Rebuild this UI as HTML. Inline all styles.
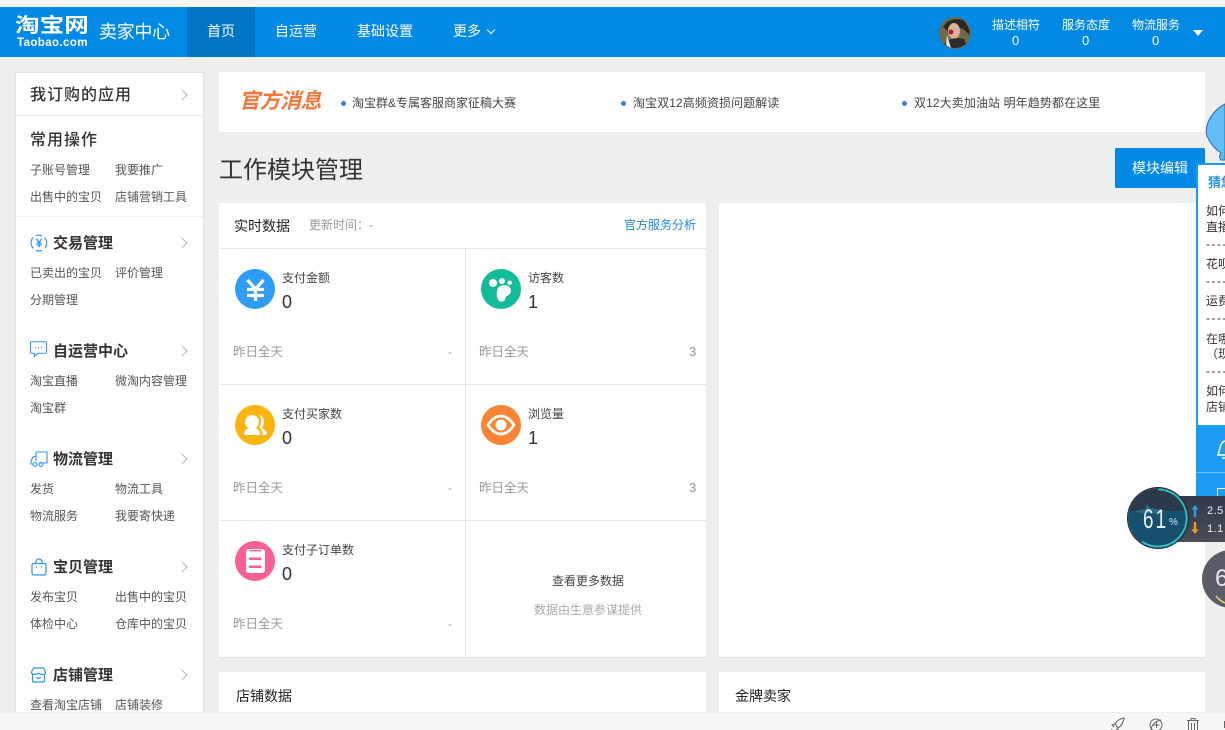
<!DOCTYPE html>
<html lang="zh"><head><meta charset="utf-8"><title>卖家中心</title>
<style>
*{margin:0;padding:0;box-sizing:border-box}
html,body{width:1225px;height:730px;overflow:hidden;background:#eeeeee}
body{position:relative;font-family:"Liberation Sans","Noto Sans CJK SC",sans-serif;font-size:12px;color:#3c3c3c}
.a{position:absolute}
.t{position:absolute;white-space:nowrap;line-height:16px;font-size:12px}
.w{background:#fff;position:absolute}
.n{color:#fff;font-size:14px}
.s{color:#555}
.h{font-size:15px;font-weight:700;color:#333}
.g{color:#999}
.ar{position:absolute;width:8px;height:8px;margin:-.5px 0 0 -1.5px;border-top:1px solid #b5b5b5;border-right:1px solid #b5b5b5;transform:rotate(45deg)}
.l{position:absolute;background:#e6e6e6}
.c{position:absolute;width:40px;height:40px;border-radius:50%}
.num{font-size:18px;color:#333;line-height:22px}
svg{position:absolute;overflow:visible}
</style></head><body>

<div class="a" style="left:0;top:0;width:1225px;height:7px;background:#f6f6f6"></div>
<div class="a" style="left:0;top:7px;width:1225px;height:50px;background:#0089e5"></div>
<div class="a" style="left:187px;top:7px;width:68px;height:50px;background:#0075c3"></div>
<div class="t" style="left:15px;top:14px;font-size:20px;line-height:24px;color:#fff;font-weight:700;transform:scaleX(1.23);transform-origin:left center">淘宝网</div>
<div class="t" style="left:17px;top:36px;font-size:11.5px;line-height:14px;color:#fff;font-weight:700;letter-spacing:.4px">Taobao.com</div>
<div class="t" style="left:99px;top:20px;font-size:18px;line-height:24px;color:#fff;letter-spacing:-.3px">卖家中心</div>
<div class="t n" style="left:207px;top:23px">首页</div>
<div class="t n" style="left:275px;top:23px">自运营</div>
<div class="t n" style="left:357px;top:23px">基础设置</div>
<div class="t n" style="left:453px;top:23px">更多</div>
<div class="a" style="left:488px;top:27px;width:6px;height:6px;border-right:1px solid #fff;border-bottom:1px solid #fff;transform:rotate(45deg)"></div>

<svg style="left:939px;top:17px" width="32" height="32" viewBox="0 0 32 32">
<circle cx="16" cy="16" r="16" fill="#6f6a4c"/>
<path d="M4 10 Q10 0 24 3 Q30 8 31 18 L24 12 Q14 8 9 14Z" fill="#2b2622"/>
<ellipse cx="15" cy="14" rx="6" ry="8" fill="#d8b09c"/>
<circle cx="12" cy="15" r="2.4" fill="#b5141e"/>
<path d="M5 27 Q12 19 25 22 L27 27 Q16 35 5 27Z" fill="#2c2a2a"/>
<path d="M8 18 L12 31 L7 28Z" fill="#e8e4dc"/>
</svg>

<div class="t" style="left:992px;top:17px;color:#fff">描述相符</div>
<div class="t" style="left:1012px;top:33px;color:#fff;font-size:13px">0</div>
<div class="t" style="left:1062px;top:17px;color:#fff">服务态度</div>
<div class="t" style="left:1082px;top:33px;color:#fff;font-size:13px">0</div>
<div class="t" style="left:1132px;top:17px;color:#fff">物流服务</div>
<div class="t" style="left:1152px;top:33px;color:#fff;font-size:13px">0</div>
<div class="a" style="left:1193px;top:30px;width:0;height:0;border-left:5.5px solid transparent;border-right:5.5px solid transparent;border-top:6px solid #fff"></div>

<!-- sidebar -->
<div class="w" style="left:15px;top:72px;width:189px;height:650px;border:1px solid #e2e2e2"></div>
<div class="l" style="left:16px;top:115px;width:187px;height:1px"></div>
<div class="t" style="left:30px;top:86px;font-size:16px;line-height:20px;letter-spacing:1px;font-weight:500;color:#333">我订购的应用</div>
<div class="ar" style="left:179px;top:91px"></div>
<div class="t" style="left:30px;top:131px;font-size:16px;line-height:20px;letter-spacing:1px;font-weight:500;color:#333">常用操作</div>
<div class="t s" style="left:30px;top:162px">子账号管理</div><div class="t s" style="left:115px;top:162px">我要推广</div>
<div class="t s" style="left:30px;top:189px">出售中的宝贝</div><div class="t s" style="left:115px;top:189px">店铺营销工具</div>
<div class="l" style="left:16px;top:216px;width:187px;height:1px;background:#efefef"></div>

<svg style="left:30px;top:234px" width="18" height="18" viewBox="0 0 18 18" fill="none" stroke="#2c97e8" stroke-width="1.2">
<path d="M3 3.5A8 8 0 0 0 3.5 14.5M14.5 3.5A8 8 0 0 1 15 14M6 1.8A8 8 0 0 1 12 1.8M6 16.3A8 8 0 0 0 12 16.3"/>
<path d="M6.3 4.8L9 8.5L11.7 4.8M9 8.5V13.2M6.3 9H11.7M6.3 11H11.7" stroke-width="1.3"/></svg>
<div class="t h" style="left:53px;top:236px">交易管理</div><div class="ar" style="left:179px;top:239px"></div>
<div class="t s" style="left:30px;top:265px">已卖出的宝贝</div><div class="t s" style="left:115px;top:265px">评价管理</div>
<div class="t s" style="left:30px;top:292px">分期管理</div>

<svg style="left:30px;top:341px" width="17" height="17" viewBox="0 0 17 17" fill="none" stroke="#2c97e8" stroke-width="1">
<path d="M1.5 .8H15.5Q16.5 .8 16.5 2V11Q16.5 12.3 15.5 12.3H8L4.5 15.5V12.3H1.5Q.5 12.3 .5 11V2Q.5 .8 1.5 .8Z"/>
<path d="M5 6.5H6M8 6.5H9M11 6.5H12" stroke-width="1.3"/></svg>
<div class="t h" style="left:53px;top:344px">自运营中心</div><div class="ar" style="left:179px;top:347px"></div>
<div class="t s" style="left:30px;top:373px">淘宝直播</div><div class="t s" style="left:115px;top:373px">微淘内容管理</div>
<div class="t s" style="left:30px;top:400px">淘宝群</div>

<svg style="left:30px;top:451px" width="18" height="16" viewBox="0 0 18 16" fill="none" stroke="#2c97e8" stroke-width="1.1">
<path d="M6 10V3Q6 1 8 1H17V12H9M6 5L3 6L1 10V13H3"/>
<circle cx="5" cy="13.5" r="2"/><circle cx="11" cy="13.5" r="2"/></svg>
<div class="t h" style="left:53px;top:452px">物流管理</div><div class="ar" style="left:179px;top:455px"></div>
<div class="t s" style="left:30px;top:481px">发货</div><div class="t s" style="left:115px;top:481px">物流工具</div>
<div class="t s" style="left:30px;top:508px">物流服务</div><div class="t s" style="left:115px;top:508px">我要寄快递</div>

<svg style="left:31px;top:558px" width="16" height="18" viewBox="0 0 16 18" fill="none" stroke="#2c97e8" stroke-width="1.2">
<path d="M2.5 5.5H13.5Q15 5.5 15 7.5V15Q15 17 13 17H3Q1 17 1 15V7.5Q1 5.5 2.5 5.5Z"/>
<path d="M4.5 5.5Q5 1 8 1Q11 1 11.5 5.5M5 9H6M10 9H11"/></svg>
<div class="t h" style="left:53px;top:560px">宝贝管理</div><div class="ar" style="left:179px;top:563px"></div>
<div class="t s" style="left:30px;top:589px">发布宝贝</div><div class="t s" style="left:115px;top:589px">出售中的宝贝</div>
<div class="t s" style="left:30px;top:616px">体检中心</div><div class="t s" style="left:115px;top:616px">仓库中的宝贝</div>

<svg style="left:31px;top:667px" width="15" height="16" viewBox="0 0 15 16" fill="none" stroke="#2c97e8" stroke-width="1.2">
<path d="M2.5 1H12.5L14.5 5Q14.5 7.5 12 7.5Q9.5 7.5 7.5 6.3Q5.5 7.5 3 7.5Q.5 7.5 .5 5ZM1.5 7.5V14Q1.5 15 3 15H12Q13.5 15 13.5 14V7.5M5 11H10"/></svg>
<div class="t h" style="left:53px;top:668px">店铺管理</div><div class="ar" style="left:179px;top:671px"></div>
<div class="t s" style="left:30px;top:697px">查看淘宝店铺</div><div class="t s" style="left:115px;top:697px">店铺装修</div>

<!-- notice -->
<div class="w" style="left:219px;top:72px;width:986px;height:60px"></div>
<div class="t" style="left:239px;top:89px;font-size:21px;line-height:26px;font-weight:700;font-style:italic;color:#f4773a;letter-spacing:-.5px">官方消息</div>
<div class="a" style="left:341px;top:101px;width:5px;height:5px;border-radius:50%;background:#3f7fdc"></div>
<div class="t" style="left:352px;top:95px;color:#444">淘宝群&amp;专属客服商家征稿大赛</div>
<div class="a" style="left:621px;top:101px;width:5px;height:5px;border-radius:50%;background:#3f7fdc"></div>
<div class="t" style="left:633px;top:95px;color:#444;letter-spacing:.08px">淘宝双12高频资损问题解读</div>
<div class="a" style="left:902px;top:101px;width:5px;height:5px;border-radius:50%;background:#3f7fdc"></div>
<div class="t" style="left:914px;top:95px;color:#444;letter-spacing:.1px">双12大卖加油站 明年趋势都在这里</div>

<div class="t" style="left:219px;top:155px;font-size:24px;line-height:32px;color:#333">工作模块管理</div>
<div class="a" style="left:1115px;top:148px;width:90px;height:40px;background:#0089e5;border-radius:2px"></div>
<div class="t" style="left:1132px;top:160px;font-size:14px;color:#fff">模块编辑</div>

<!-- realtime card -->
<div class="w" style="left:219px;top:203px;width:487px;height:455px;border-bottom:1px solid #e6e6e6"></div>
<div class="t" style="left:234px;top:218px;font-size:14px;color:#222">实时数据</div>
<div class="t g" style="left:309px;top:217px">更新时间：-</div>
<div class="t" style="left:624px;top:217px;color:#1f88d0">官方服务分析</div>
<div class="l" style="left:219px;top:248px;width:487px;height:1px"></div>
<div class="l" style="left:219px;top:384px;width:487px;height:1px"></div>
<div class="l" style="left:219px;top:520px;width:487px;height:1px"></div>
<div class="l" style="left:465px;top:249px;width:1px;height:408px"></div>

<div class="c" style="left:235px;top:269px;background:#2f9cf5"></div>
<svg style="left:235px;top:269px" width="40" height="40" viewBox="0 0 40 40" fill="none" stroke="#fff" stroke-width="3.2"><path d="M12.500 11L20.500 20L28.500 11M20.500 20V32M12 20.500H29M12 26.500H29"/></svg>
<div class="t" style="left:282px;top:270px;color:#444">支付金额</div>
<div class="t num" style="left:282px;top:291px">0</div>
<div class="t g" style="left:233px;top:344px;font-size:12.5px">昨日全天</div><div class="t g" style="left:448px;top:344px">-</div>

<div class="c" style="left:481px;top:269px;background:#12bc98"></div>
<svg style="left:481px;top:269px" width="40" height="40" viewBox="0 0 40 40" fill="#fff"><circle cx="12" cy="14" r="4"/><circle cx="21" cy="12" r="3"/><circle cx="28.700" cy="13.700" r="2.200"/><path d="M16 21Q18 16 24 16Q30 17 30 22Q29 26 26 27Q24 28 24 31Q21 34 18 32Q15 29 16 21Z"/></svg>
<div class="t" style="left:528px;top:270px;color:#444">访客数</div>
<div class="t num" style="left:528px;top:291px">1</div>
<div class="t g" style="left:479px;top:344px;font-size:12.5px">昨日全天</div><div class="t g" style="left:689px;top:344px;font-size:13px">3</div>

<div class="c" style="left:235px;top:405px;background:#fdb40e"></div>
<svg style="left:235px;top:405px" width="40" height="40" viewBox="0 0 40 40" fill="#fff"><circle cx="17" cy="17" r="7"/><path d="M9 30Q9 24 14 23H20Q25 24 25 30Z"/><path d="M23 9.500Q29 11 29 17Q29 21 26.500 23Q32 25 32 30H27.500Q27.500 24.500 24 22Q27 19 26 14Q25.500 11 23 9.500Z"/></svg>
<div class="t" style="left:282px;top:406px;color:#444">支付买家数</div>
<div class="t num" style="left:282px;top:427px">0</div>
<div class="t g" style="left:233px;top:480px;font-size:12.5px">昨日全天</div><div class="t g" style="left:448px;top:480px">-</div>

<div class="c" style="left:481px;top:405px;background:#fb8334"></div>
<svg style="left:481px;top:405px" width="40" height="40" viewBox="0 0 40 40"><path d="M7 20Q13 11 20 11Q27 11 33 20Q27 29 20 29Q13 29 7 20Z" fill="none" stroke="#fff" stroke-width="2.800"/><circle cx="20" cy="20" r="5.500" fill="#fff"/></svg>
<div class="t" style="left:528px;top:406px;color:#444">浏览量</div>
<div class="t num" style="left:528px;top:427px">1</div>
<div class="t g" style="left:479px;top:480px;font-size:12.5px">昨日全天</div><div class="t g" style="left:689px;top:480px;font-size:13px">3</div>

<div class="c" style="left:235px;top:541px;background:#fb5f96"></div>
<svg style="left:235px;top:541px" width="40" height="40" viewBox="0 0 40 40"><rect x="11" y="8" width="19" height="24" rx="3" fill="#fff"/><rect x="14.500" y="9" width="12" height="1.400" fill="#fb5f96"/><rect x="14" y="16.500" width="12.500" height="2.500" fill="#fb5f96"/><rect x="14" y="24.500" width="12.500" height="2.500" fill="#fb5f96"/></svg>
<div class="t" style="left:282px;top:542px;color:#444">支付子订单数</div>
<div class="t num" style="left:282px;top:563px">0</div>
<div class="t g" style="left:233px;top:616px;font-size:12.5px">昨日全天</div><div class="t g" style="left:448px;top:616px">-</div>

<div class="t" style="left:552px;top:573px;color:#444">查看更多数据</div>
<div class="t" style="left:534px;top:602px;color:#aaa">数据由生意参谋提供</div>

<!-- right blank card -->
<div class="w" style="left:719px;top:203px;width:486px;height:455px;border-bottom:1px solid #e6e6e6"></div>
<!-- lower cards -->
<div class="w" style="left:219px;top:672px;width:487px;height:50px"></div>
<div class="w" style="left:719px;top:672px;width:486px;height:50px"></div>
<div class="t" style="left:236px;top:688px;font-size:14px;color:#222">店铺数据</div>
<div class="t" style="left:735px;top:688px;font-size:14px;color:#222">金牌卖家</div>

<!-- bottom bar -->
<div class="a" style="left:0;top:712px;width:1225px;height:18px;background:#f7f7f7;border-top:1px solid #eeeeee"></div>
<svg style="left:1110px;top:718px" width="16" height="14" viewBox="0 0 16 14" fill="none" stroke="#666" stroke-width="1.100"><path d="M14 0Q8 1 5 6L8 10Q13 7 14 0ZM5 6L2 7L4 9M8 10L8 13L6 11M2 11Q1 13 2 14"/></svg>
<svg style="left:1149px;top:718px" width="14" height="14" viewBox="0 0 14 14" fill="none" stroke="#666" stroke-width="1"><circle cx="7" cy="7" r="6"/><path d="M7.500 4V10M4.500 7H10.500M2 12Q3 4 12 2"/></svg>
<svg style="left:1187px;top:718px" width="12" height="13" viewBox="0 0 12 13" fill="none" stroke="#666" stroke-width="1"><path d="M0 2.500H12M4 2.500V.5H8V2.500M1.500 2.500V13H10.500V2.500M4.500 5V13M7.500 5V13"/></svg>
<div class="a" style="left:1224px;top:721px;width:1px;height:7px;background:#666"></div>

<!-- floating widget -->
<svg style="left:1205px;top:103px" width="20" height="64" viewBox="0 0 20 64"><path d="M20 1Q10 6 4 17Q-1 28 3 35Q7 44 16 50Q13 54 16 57H20Z" fill="#62bdf6" stroke="#2b6fa8" stroke-width="1"/></svg>
<div class="w" style="left:1196px;top:163px;width:29px;height:262px;border-left:2px solid #1a9cf5;border-top:2px solid #1a9cf5;overflow:hidden">
<div class="t" style="left:10px;top:10px;font-size:13px;font-weight:700;color:#2a93e8">猜您喜欢</div>
<div class="t" style="left:8px;top:38px;color:#333">如何开通</div>
<div class="t" style="left:8px;top:54px;color:#333">直播权限</div>
<div class="t" style="left:8px;top:71px;color:#333;letter-spacing:1.500px">------</div>
<div class="t" style="left:8px;top:91px;color:#333">花呗怎么</div>
<div class="t" style="left:8px;top:108px;color:#333;letter-spacing:1.500px">------</div>
<div class="t" style="left:8px;top:128px;color:#333">运费怎么</div>
<div class="t" style="left:8px;top:145px;color:#333;letter-spacing:1.500px">------</div>
<div class="t" style="left:8px;top:166px;color:#333">在哪里看</div>
<div class="t" style="left:8px;top:181px;color:#333">（现在</div>
<div class="t" style="left:8px;top:198px;color:#333;letter-spacing:1.500px">------</div>
<div class="t" style="left:8px;top:218px;color:#333">如何设置</div>
<div class="t" style="left:8px;top:234px;color:#333">店铺首页</div>
</div>
<div class="a" style="left:1196px;top:425px;width:29px;height:80px;background:#1a9cf5"></div>
<div class="a" style="left:1196px;top:472px;width:29px;height:1px;background:#6cc0f8"></div>
<svg style="left:1217px;top:440px" width="8" height="20" viewBox="0 0 8 20" fill="none" stroke="#fff" stroke-width="1.500"><path d="M8 1Q4 2 3 8L1 15H8M5 18H8"/></svg>
<div class="a" style="left:1217px;top:488px;width:8px;height:10px;border:1.5px solid #fff;border-right:0"></div>

<div class="a" style="left:1170px;top:496px;width:55px;height:46px;background:linear-gradient(#30394a,#4a4c57)"></div>
<div class="a" style="left:1128px;top:488px;width:60px;height:60px;border-radius:50%;background:linear-gradient(#2b3a4b 0 38%,#17506f 38%);box-shadow:0 0 0 1px #1b2733"></div>
<svg style="left:1128px;top:488px" width="60" height="60" viewBox="0 0 60 60" fill="none"><path d="M7 23Q12 22 17 21L19 16L22 20Q30 21 37 23Q30 26 20 25Q12 26 7 23Z" fill="#2a6a88"/><path d="M30 1.500A28.500 28.500 0 1 1 14 53.500" stroke="#2fc1c6" stroke-width="1.800"/></svg>
<div class="t" style="left:1143px;top:504px;font-size:27px;line-height:30px;color:#e8f2f5;letter-spacing:3px;transform:scaleX(.7);transform-origin:left center">61</div>
<div class="t" style="left:1169px;top:516px;font-size:10px;line-height:14px;color:#d8e6ea">%</div>
<svg style="left:1191px;top:505px" width="8" height="12" viewBox="0 0 8 13"><path d="M4 0L8 5H5.300V13H2.700V5H0Z" fill="#2a9fe6"/></svg>
<svg style="left:1191px;top:522px" width="8" height="12" viewBox="0 0 8 13"><path d="M4 13L8 8H5.300V0H2.700V8H0Z" fill="#ee9a25"/></svg>
<div class="t" style="left:1207px;top:503px;font-size:11px;color:#eef;letter-spacing:.5px">2.5</div>
<div class="t" style="left:1207px;top:521px;font-size:11px;color:#eef;letter-spacing:.5px">1.1</div>

<div class="a" style="left:1202px;top:550px;width:58px;height:58px;border-radius:50%;background:#5a5d68"></div>
<svg style="left:1202px;top:550px" width="23" height="58" viewBox="0 0 23 58" fill="none"><path d="M14 46Q18 51 23 53" stroke="#dcd86a" stroke-width="1.500"/></svg>
<div class="t" style="left:1215px;top:564px;font-size:24px;line-height:30px;color:#e5e7ea">6</div>

</body></html>
